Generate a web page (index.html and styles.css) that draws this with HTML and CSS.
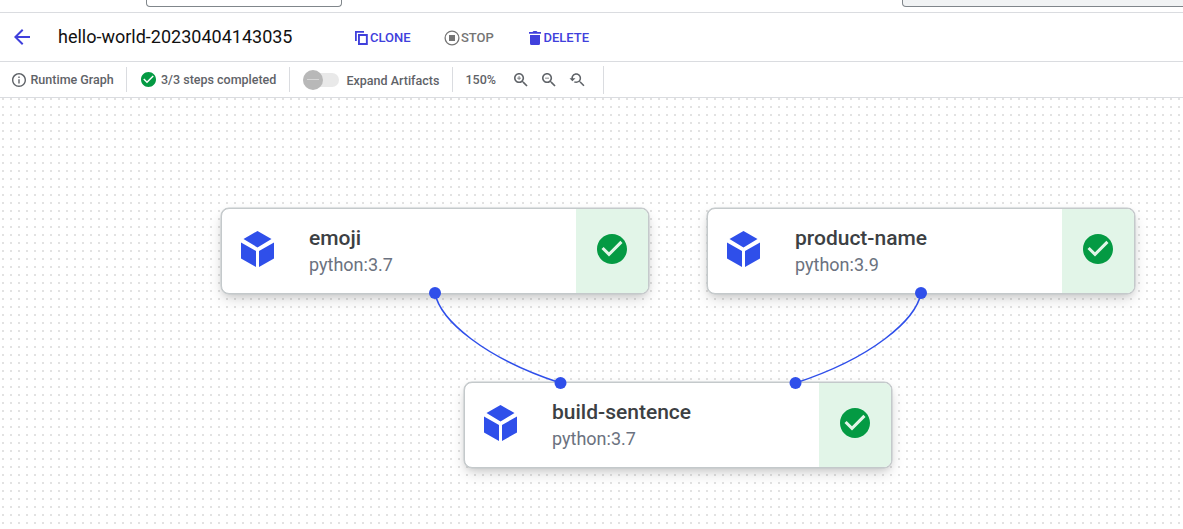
FILE: index.html
```
<!DOCTYPE html>
<html lang="en">
<head>
<meta charset="utf-8">
<title>hello-world-20230404143035</title>
<link rel="stylesheet" href="styles.css">
</head>
<body>
<svg class="defs" width="0" height="0">
  <symbol id="check" viewBox="2 2 20 20"><path d="M12 2C6.48 2 2 6.48 2 12s4.480 10 10 10 10-4.480 10-10S17.520 2 12 2zm-2 15l-5-5 1.410-1.410L10 14.170l7.590-7.590L19 8l-9 9z"/></symbol>
  <symbol id="cube" viewBox="0 0 33 36"><path d="M16.500 0 30.500 8 16.500 16.500 2.500 8zM0 11.500 15 20v16L0 27.500zM33 11.500 18 20v16l15-8.500z"/></symbol>
</svg>
<div class="page">
  <div class="top-strip"><div class="field field-left"></div><div class="field field-right"></div></div>
  <header class="header">
    <svg class="back" viewBox="4 4 16 16"><path d="M20 11H7.830l5.590-5.590L12 4l-8 8 8 8 1.410-1.410L7.830 13H20v-2z"/></svg>
    <h1 class="title">hello-world-20230404143035</h1>
    <button class="action clone"><svg class="clone-icon" viewBox="0 0 13 14"><path d="M0 0h9v1.800H1.800V10H0zM3 3h9.800v11H3zm1.900 1.900v7.200h6V4.900z" fill-rule="evenodd"/></svg>CLONE</button>
    <button class="action stop"><svg class="stop-icon" viewBox="0 0 16 16"><circle cx="8" cy="8" r="6.900" fill="none" stroke="currentColor" stroke-width="1.300"/><path d="M5 5h6v6H5z"/></svg>STOP</button>
    <button class="action delete"><svg class="trash-icon" viewBox="0 0 12 14"><path d="M1 4h10v8.500q0 1.500-1.500 1.500h-7Q1 14 1 12.500zM0 1h3.500l1-1h3l1 1H12v1.700H0z"/></svg>DELETE</button>
  </header>
  <div class="toolbar">
    <div class="tool runtime"><svg class="info" viewBox="2 2 20 20"><path d="M11 7h2v2h-2zm0 4h2v6h-2zm1-9C6.480 2 2 6.480 2 12s4.480 10 10 10 10-4.480 10-10S17.520 2 12 2zm0 18c-4.410 0-8-3.590-8-8s3.590-8 8-8 8 3.590 8 8-3.590 8-8 8z"/></svg>Runtime Graph</div>
    <div class="tool steps"><svg class="steps-icon"><use href="#check"/></svg>3/3 steps completed</div>
    <div class="tool expand"><span class="switch"><span class="thumb"></span></span><span class="expand-label">Expand Artifacts</span></div>
    <div class="tool zoom"><span class="percent">150%</span>
      <svg class="lens" viewBox="3 3 18 18"><path d="M15.500 14h-.79l-.28-.27C15.410 12.590 16 11.110 16 9.500 16 5.910 13.090 3 9.500 3S3 5.910 3 9.500 5.910 16 9.500 16c1.610 0 3.090-.59 4.230-1.570l.27.28v.79l5 4.990L20.490 19l-4.990-5zm-6 0C7.010 14 5 11.990 5 9.500S7.010 5 9.500 5 14 7.010 14 9.500 11.990 14 9.500 14zM7 9h2V7h1v2h2v1h-2v2H9v-2H7z"/></svg>
      <svg class="lens" viewBox="3 3 18 18"><path d="M15.500 14h-.79l-.28-.27C15.410 12.590 16 11.110 16 9.500 16 5.910 13.090 3 9.500 3S3 5.910 3 9.500 5.910 16 9.500 16c1.610 0 3.090-.59 4.230-1.570l.27.28v.79l5 4.990L20.490 19l-4.990-5zm-6 0C7.010 14 5 11.990 5 9.500S7.010 5 9.500 5 14 7.010 14 9.500 11.990 14 9.500 14zM7 9h5v1H7z"/></svg>
      <svg class="reset" viewBox="0 0 24 24"><path d="M17.010 14h-.8l-.27-.27c.98-1.140 1.570-2.610 1.570-4.230 0-3.590-2.910-6.500-6.500-6.500s-6.500 3-6.500 6.500H2l3.840 4 4.160-4H6.510C6.510 7 8.530 5 11.010 5s4.500 2.010 4.500 4.500c0 2.480-2.020 4.500-4.500 4.500-.65 0-1.260-.14-1.820-.38L7.710 15.100c.97.57 2.090.9 3.300.9 1.610 0 3.080-.59 4.220-1.570l.27.27v.79l5.010 4.990L22 19l-4.990-5z"/></svg>
    </div>
  </div>
  <main class="canvas">
    <div class="node emoji"><svg class="cube"><use href="#cube"/></svg><div class="text"><div class="name">emoji</div><div class="image">python:3.7</div></div><div class="status"><svg><use href="#check"/></svg></div></div>
    <div class="node product"><svg class="cube"><use href="#cube"/></svg><div class="text"><div class="name">product-name</div><div class="image">python:3.9</div></div><div class="status"><svg><use href="#check"/></svg></div></div>
    <div class="node sentence"><svg class="cube"><use href="#cube"/></svg><div class="text"><div class="name">build-sentence</div><div class="image">python:3.7</div></div><div class="status"><svg><use href="#check"/></svg></div></div>
    <svg class="edges" viewBox="0 98 1183 431">
      <path d="M435 293C440 320 484 358 560.500 383M921 293C916 320 872 358 795.500 383" fill="none" stroke="#2f4fea" stroke-width="1.500"/>
      <g fill="#2f4fea"><circle cx="435" cy="293" r="6"/><circle cx="921" cy="293" r="6"/><circle cx="560.500" cy="383" r="6"/><circle cx="795.500" cy="383" r="6"/></g>
    </svg>
  </main>
</div>
</body>
</html>
```
FILE: styles.css
```
* { box-sizing: border-box; }
body { margin: 0; background: #fff; font-family: Roboto, sans-serif; }
svg { display: block; flex: none; fill: currentColor; }
.defs { position: absolute; }
.page { display: flex; flex-direction: column; width: 1183px; height: 529px; overflow: hidden; }
.top-strip { display: flex; height: 13px; flex: none; border-bottom: 1px solid #dadce0; overflow: hidden; }
.field { height: 7px; border: 1px solid #80868b; border-top: 0; border-radius: 0 0 4px 4px; }
.field-left { width: 196px; margin-left: 146px; }
.field-right { flex: 1; margin-left: 560px; margin-right: -6px; background: #f1f3f4; }
.header { display: flex; align-items: center; height: 49px; flex: none; border-bottom: 1px solid #dadce0; }
.back { width: 16px; height: 16px; margin-left: 14px; color: #4040dc; }
.title { width: 297px; margin: 0 0 0 28px; font-size: 18px; font-weight: 400; line-height: 24px; color: #111; }
.action { display: flex; align-items: center; padding: 1px 0 0; border: 0; background: none; font: 500 13px/16px Roboto, sans-serif; color: #4040dc; }
.clone-icon { width: 13px; height: 14px; margin-right: 2px; }
.trash-icon { width: 12px; height: 14px; margin: 0 3px 0 0; }
.clone { width: 89px; }
.stop { width: 84.500px; color: #757575; }
.stop-icon { width: 16px; height: 16px; margin-right: 1px; }
.toolbar { display: flex; align-items: center; height: 36px; flex: none; border-bottom: 1px solid #dadce0; font-size: 12.500px; font-weight: 500; line-height: 16px; color: #5f6368; white-space: nowrap; }
.tool { display: flex; align-items: center; height: 25px; border-right: 1px solid #dadce0; }
.runtime { width: 127px; padding-left: 12px; gap: 4.500px; }
.info { width: 14px; height: 14px; }
.steps { width: 163px; padding-left: 14px; gap: 5px; }
.steps-icon { width: 15px; height: 15px; color: #049a43; }
.expand { width: 163px; padding-left: 13px; }
.switch { display: flex; align-items: center; width: 36px; height: 14px; border-radius: 7px; background: #e9e9e9; margin-right: 7.500px; }
.thumb { display: flex; align-items: center; justify-content: center; width: 20px; height: 20px; flex: none; border-radius: 50%; background: #b8b8b8; }
.thumb::before { content: ""; width: 12px; height: 1.500px; background: #d6d6d6; }
.expand-label { padding-top: 2px; }
.zoom { width: 151px; height: 28px; padding-left: 12.500px; }
.percent { width: 48.500px; }
.lens { width: 14px; height: 14px; margin-right: 14px; }
.reset { width: 18px; height: 18px; margin-left: -2px; }
.canvas { position: relative; flex: 1; background: conic-gradient(from 0deg at 2px 2px, #0000 270deg, #e2e2e2 0) 2px 0 / 8px 8px; }
.node { position: absolute; display: flex; align-items: center; width: 428px; height: 86px; padding-left: 19px; border: 1px solid #c4c9cb; border-radius: 8px; overflow: hidden; background: #fff; box-shadow: 0 0 0 0.500px #c4c9cb, 0 6px 15px -2px #0000002e, 0 3px 6px -1px #00000018; }
.emoji { left: 221px; top: 110px; }
.product { left: 707px; top: 110px; }
.sentence { left: 464px; top: 284px; }
.cube { width: 33px; height: 36px; margin-top: -4px; color: #2f4fea; }
.text { flex: 1; padding-left: 35px; }
.name { padding-top: 1px; font-size: 21px; line-height: 27px; font-weight: 500; color: #3c4043; }
.image { font-size: 18px; line-height: 26px; color: #6b7280; }
.status { display: flex; align-items: center; justify-content: center; width: 72px; height: 100%; padding-bottom: 4px; background: #e2f5e8; }
.status svg { width: 30px; height: 30px; color: #049a43; }
.edges { position: absolute; left: 0; top: 0; width: 1183px; height: 431px; }
```
